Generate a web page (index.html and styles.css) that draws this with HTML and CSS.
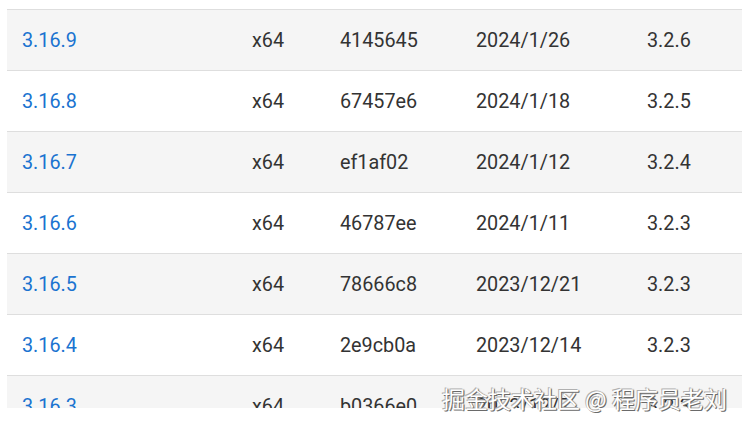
FILE: index.html
```html
<!DOCTYPE html>
<html lang="zh">
<head>
<meta charset="utf-8">
<link rel="stylesheet" href="styles.css">
</head>
<body>
<div class="page">
  <div class="clip">
    <table class="versions">
      <colgroup>
        <col class="c1"><col class="c2"><col class="c3"><col class="c4"><col class="c5">
      </colgroup>
      <tbody>
        <tr><td><a href="#">3.16.9</a></td><td>x64</td><td>4145645</td><td>2024/1/26</td><td>3.2.6</td></tr>
        <tr><td><a href="#">3.16.8</a></td><td>x64</td><td>67457e6</td><td>2024/1/18</td><td>3.2.5</td></tr>
        <tr><td><a href="#">3.16.7</a></td><td>x64</td><td>ef1af02</td><td>2024/1/12</td><td>3.2.4</td></tr>
        <tr><td><a href="#">3.16.6</a></td><td>x64</td><td>46787ee</td><td>2024/1/11</td><td>3.2.3</td></tr>
        <tr><td><a href="#">3.16.5</a></td><td>x64</td><td>78666c8</td><td>2023/12/21</td><td>3.2.3</td></tr>
        <tr><td><a href="#">3.16.4</a></td><td>x64</td><td>2e9cb0a</td><td>2023/12/14</td><td>3.2.3</td></tr>
        <tr><td><a href="#">3.16.3</a></td><td>x64</td><td>b0366e0</td><td>2023/12/7</td><td>3.2.3</td></tr>
      </tbody>
    </table>
  </div>
  <div class="watermark">掘金技术社区 @ 程序员老刘</div>
</div>
</body>
</html>
```

FILE: styles.css
```css
html, body {
  margin: 0;
  padding: 0;
  background: #ffffff;
}
.page {
  position: relative;
  width: 742px;
  height: 424px;
  overflow: hidden;
}
.clip {
  margin-left: 7px;
  margin-top: 9px;
  height: 399px;
  overflow: hidden;
}
.versions {
  width: 735px;
  border-collapse: collapse;
  table-layout: fixed;
  font-family: Roboto, "Noto Sans", sans-serif;
  font-size: 19.8px;
  color: #333333;
}
.c1 { width: 230px; }
.c2 { width: 88px; }
.c3 { width: 136px; }
.c4 { width: 171px; }
.c5 { width: 110px; }
.versions tr {
  height: 61px;
  border-top: 1px solid #dedede;
}
.versions tr:nth-child(odd) {
  background: #f5f5f5;
}
.versions td {
  padding: 0 0 0 15px;
  vertical-align: middle;
  white-space: nowrap;
}
.versions a {
  color: #1a73d0;
  text-decoration: none;
}
.watermark {
  position: absolute;
  right: 15px;
  top: 383px;
  font-family: "Noto Sans CJK SC", sans-serif;
  font-size: 23px;
  line-height: 30px;
  color: #ffffff;
  text-shadow: 1px 1px 0 #6a6a6a, -1px -1px 0 #b0b0b0, 1px 0 1px #888888;
}
```
